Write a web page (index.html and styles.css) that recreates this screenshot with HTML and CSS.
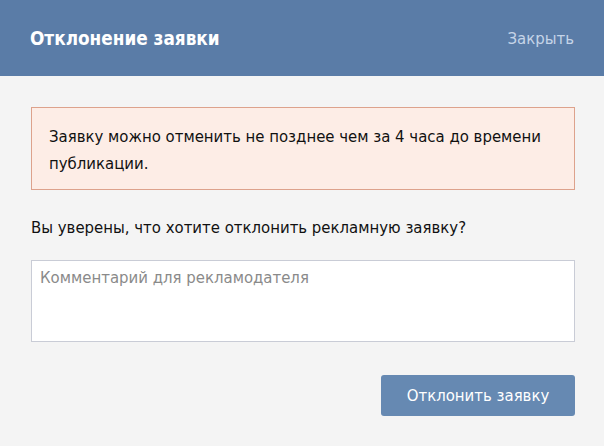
FILE: index.html
```html
<!DOCTYPE html>
<html lang="ru">
<head>
<meta charset="utf-8">
<link rel="stylesheet" href="styles.css">
</head>
<body>
<div class="box">
  <header class="head">
    <h1 class="title">Отклонение заявки</h1>
    <a class="close">Закрыть</a>
  </header>
  <main class="body">
    <div class="warn">Заявку можно отменить не позднее чем за 4 часа до времени публикации.</div>
    <p class="question">Вы уверены, что хотите отклонить рекламную заявку?</p>
    <textarea class="comment" placeholder="Комментарий для рекламодателя"></textarea>
    <div class="actions">
      <button class="btn">Отклонить заявку</button>
    </div>
  </main>
</div>
</body>
</html>
```

FILE: styles.css
```css
html, body {
  margin: 0;
  padding: 0;
  background: #f4f4f4;
  font-family: "DejaVu Sans Condensed", "DejaVu Sans", sans-serif;
  color: #111;
}
.box {
  width: 604px;
  height: 446px;
  overflow: hidden;
}
.head {
  height: 76px;
  background: #5a7ca7;
  display: flex;
  align-items: center;
  justify-content: space-between;
  padding: 0 30px 0 30px;
  box-sizing: border-box;
}
.title {
  margin: 0;
  font-size: 18.8px;
  font-weight: bold;
  color: #fff;
}
.close {
  color: #c5d4e8;
  font-size: 16.6px;
}
.body {
  padding: 31px 29px 0 31px;
}
.warn {
  background: #fdede6;
  border: 1px solid #dda28c;
  padding: 15px 17px 12px 17px;
  font-size: 16.6px;
  line-height: 27px;
}
.question {
  margin: 27px 0 0 0;
  font-size: 16.6px;
  line-height: 22px;
}
.comment {
  display: block;
  margin-top: 21px;
  width: 544px;
  height: 82px;
  box-sizing: border-box;
  border: 1px solid #c9ccd6;
  background: #fff;
  padding: 7px 8px 4px 8px;
  font-family: inherit;
  font-size: 16.6px;
  resize: none;
}
.comment::placeholder {
  color: #8a8a8a;
}
.actions {
  display: flex;
  justify-content: flex-end;
  margin-top: 33px;
}
.btn {
  width: 194px;
  height: 41px;
  background: #6689b2;
  border: none;
  border-radius: 3px;
  color: #fff;
  font-family: inherit;
  font-size: 16.6px;
}
```
